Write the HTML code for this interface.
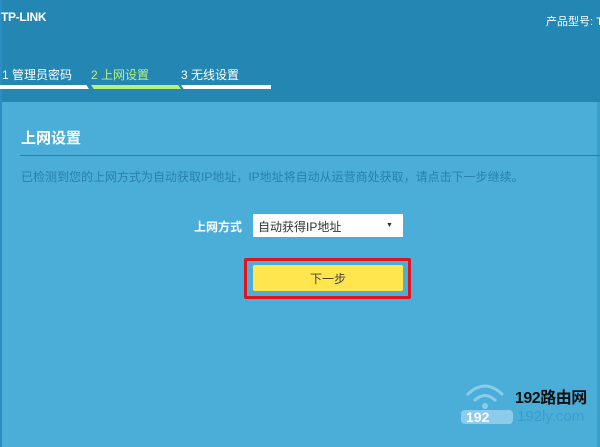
<!DOCTYPE html>
<html><head><meta charset="utf-8"><style>
body{margin:0;width:600px;height:447px;overflow:hidden;background:#4aaed8;font-family:"Liberation Sans","Noto Sans CJK SC",sans-serif;position:relative}
.a{position:absolute;white-space:nowrap}
</style></head><body>
<div class="a" style="left:0;top:0;width:600px;height:102px;background:#2386b3"></div>
<div class="a" style="left:0;top:0;width:2px;height:447px;background:#2a8fc0"></div>
<div class="a" style="left:597px;top:102px;width:3px;height:345px;background:#3a9fcc"></div>
<div class="a" style="left:1px;top:10px;color:#fff;font-weight:bold;font-size:12px;letter-spacing:-0.3px">TP-LINK</div>
<div class="a" style="left:546px;top:13px;color:#fff;font-size:11px">产品型号: TL-W</div>
<div class="a" style="left:2px;top:66px;color:#fff;font-size:12px">1 管理员密码</div>
<div class="a" style="left:91px;top:66px;color:#b7f27d;font-size:12px">2 上网设置</div>
<div class="a" style="left:181px;top:66px;color:#fff;font-size:12px">3 无线设置</div>
<div class="a" style="left:0;top:85px;width:89px;height:4px;background:#fff;clip-path:polygon(0 0,97% 0,100% 100%,0 100%)"></div>
<div class="a" style="left:91px;top:85px;width:90px;height:4px;background:#b7f27d;clip-path:polygon(0 0,97% 0,100% 100%,3% 100%)"></div>
<div class="a" style="left:181px;top:85px;width:90px;height:4px;background:#fff;clip-path:polygon(0 0,100% 0,100% 100%,3% 100%)"></div>
<div class="a" style="left:21px;top:127px;color:#fff;font-size:15px;font-weight:bold">上网设置</div>
<div class="a" style="left:20px;top:155px;width:580px;height:1px;background:#2a7fae"></div>
<div class="a" style="left:21px;top:168px;color:#2a7fae;font-size:12px">已检测到您的上网方式为自动获取IP地址，IP地址将自动从运营商处获取，请点击下一步继续。</div>
<div class="a" style="left:194px;top:218px;color:#fff;font-size:12px;font-weight:bold">上网方式</div>
<div class="a" style="left:253px;top:214px;width:150px;height:23px;background:#fff"></div>
<div class="a" style="left:258px;top:218px;color:#333;font-size:12px">自动获得IP地址</div>
<div class="a" style="left:386px;top:222px;color:#333;font-size:7px">▼</div>
<div class="a" style="left:244px;top:258px;width:161px;height:35px;border:3px solid #e0141e;border-radius:2px"></div>
<div class="a" style="left:253px;top:265px;width:150px;height:26px;background:#ffe64e;border-radius:2px"></div>
<div class="a" style="left:310px;top:270px;color:#444;font-size:12px">下一步</div>
<svg class="a" style="left:462px;top:380px" width="50" height="40" viewBox="0 0 50 40"><g fill="none" stroke="#8ccbea" stroke-width="3"><path d="M5 15 Q23 -3 41 15"/><path d="M12 21 Q23 10 34 21"/></g><circle cx="23" cy="26" r="3" fill="#8ccbea"/></svg>
<div class="a" style="left:461px;top:410px;width:52px;height:14px;background:#8ccbea;border-radius:4px"></div>
<div class="a" style="left:466px;top:409px;color:#fff;font-weight:bold;font-size:14px">192</div>
<div class="a" style="left:515px;top:384px;color:#111;font-weight:bold;font-size:16px;letter-spacing:-0.5px">192路由网</div>
<div class="a" style="left:517px;top:408px;color:#3a9dd0;font-size:15px">192ly.com</div>
</body></html>
